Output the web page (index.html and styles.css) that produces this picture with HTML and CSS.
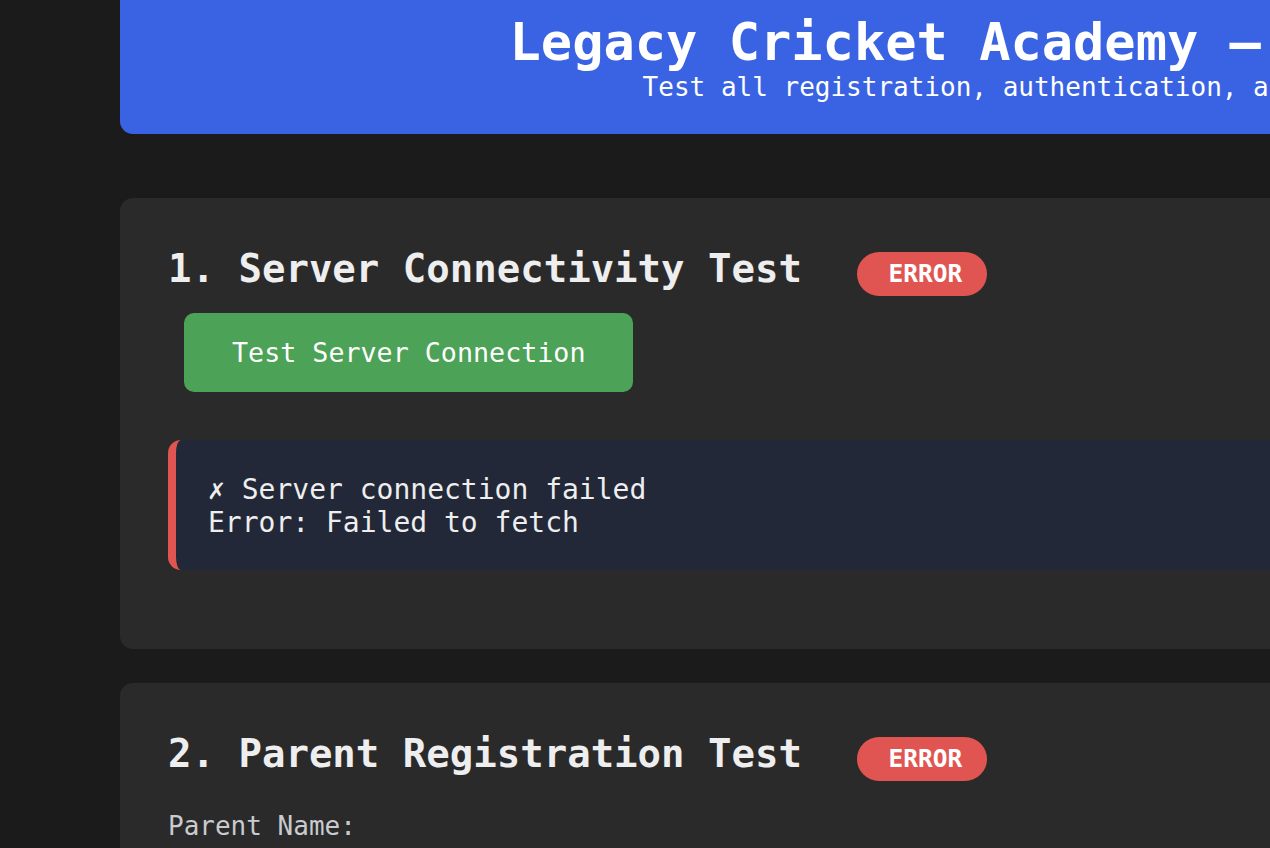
FILE: index.html
```html
<!DOCTYPE html>
<html lang="en">
<head>
<meta charset="utf-8">
<title>Legacy Cricket Academy – System Test Suite</title>
<link rel="stylesheet" href="styles.css">
</head>
<body>
<div class="container">
  <header class="hero">
    <h1 class="hero-title">Legacy Cricket Academy – System Test Suite</h1>
    <p class="hero-sub">Test all registration, authentication, and dashboard functionality.</p>
  </header>

  <section class="card">
    <h2 class="card-title">1. Server Connectivity Test <span class="badge badge-error">ERROR</span></h2>
    <button class="btn btn-green" type="button">Test Server Connection</button>
    <div class="result result-error">✗ Server connection failed
Error: Failed to fetch</div>
  </section>

  <section class="card">
    <h2 class="card-title">2. Parent Registration Test <span class="badge badge-error">ERROR</span></h2>
    <div class="form-group">
      <label class="form-label">Parent Name:</label>
    </div>
  </section>
</div>
</body>
</html>
```

FILE: styles.css
```css
html {
  overflow-x: hidden;
  scrollbar-width: none;
}
body {
  margin: 0;
  background: #1b1b1b;
  color: #eeeeee;
  font-family: "DejaVu Sans Mono", "Liberation Mono", monospace;
}
.container {
  width: 2094px;
  margin: 0 0 0 120px;
}
.hero {
  background: #3a63e3;
  color: #ffffff;
  text-align: center;
  padding: 12px 0 32px;
  border-radius: 0 0 13px 13px;
  margin-bottom: 64px;
}
.hero-title {
  margin: 0;
  font-size: 52px;
  font-weight: bold;
  line-height: normal;
}
.hero-sub {
  margin: 0;
  font-size: 26px;
  line-height: normal;
}
.card {
  background: #2a2a2a;
  border-radius: 13px;
  padding: 48px;
  margin-bottom: 34px;
}
.card-title {
  margin: 0 0 17px;
  font-size: 39px;
  line-height: 46px;
  font-weight: bold;
  color: #eeeeee;
}
.badge {
  display: inline-block;
  margin-left: 32px;
  font-size: 24.5px;
  line-height: 28px;
  padding: 8px 25px 8px 31px;
  border-radius: 22px;
  color: #ffffff;
  vertical-align: baseline;
}
.badge-error {
  background: #e05552;
}
.btn {
  display: block;
  margin: 0 16px;
  font-family: inherit;
  font-size: 26.7px;
  line-height: 31px;
  padding: 24px 48px;
  border: 0;
  border-radius: 10px;
  color: #ffffff;
  cursor: pointer;
}
.btn-green {
  background: #4ca256;
}
.result {
  margin-top: 48px;
  margin-bottom: 31px;
  background: #222838;
  border-left: 8px solid #e05552;
  border-radius: 13px 0 0 13px;
  padding: 33px 32px 31px;
  font-size: 28px;
  line-height: 33px;
  white-space: pre-wrap;
  color: #eeeeee;
}
.form-group {
  margin-top: 30px;
}
.form-label {
  display: block;
  font-size: 26px;
  line-height: normal;
  color: #c9cbd0;
}
```
